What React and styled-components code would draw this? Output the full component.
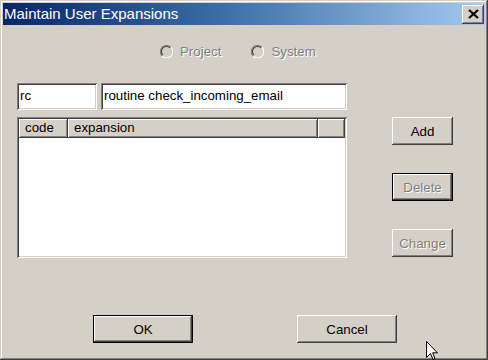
import React from "react";
import styled, { createGlobalStyle, css } from "styled-components";

const Global = createGlobalStyle`
  html, body { margin: 0; padding: 0; background: #d4d0c8; }
  body { font-family: "Liberation Sans", Arial, sans-serif; }
`;

const FACE = "#d4d0c8";

const raised = css`
  box-shadow: inset -1px -1px #404040, inset 1px 1px #ffffff,
    inset -2px -2px #808080, inset 2px 2px ${FACE};
`;

const sunken = css`
  box-shadow: inset 1px 1px #808080, inset -1px -1px #ffffff,
    inset 2px 2px #404040, inset -2px -2px ${FACE};
`;

const Window = styled.div`
  position: relative;
  width: 488px;
  height: 360px;
  box-sizing: border-box;
  padding: 3px;
  background: ${FACE};
  display: flex;
  flex-direction: column;
  overflow: hidden;
  box-shadow: inset -1px -1px #404040, inset 1px 1px ${FACE},
    inset -2px -2px #808080, inset 2px 2px #ffffff;
  font-family: "Liberation Sans", Arial, sans-serif;
  font-size: 13.3px;
  color: #000;
`;

const TitleBar = styled.div`
  height: 22px;
  flex: none;
  display: flex;
  align-items: center;
  justify-content: space-between;
  padding: 0 1px 0 1px;
  background: linear-gradient(to right, #0a246a 0%, #3a6ea5 45%, #a6caf0 100%);
`;

const Title = styled.span`
  color: #fff;
  font-size: 15px;
  line-height: 22px;
  white-space: nowrap;
`;

const CloseButton = styled.div`
  width: 22px;
  height: 19px;
  background: ${FACE};
  ${raised};
  display: flex;
  align-items: center;
  justify-content: center;
`;

const Body = styled.div`
  display: flex;
  flex-direction: column;
`;

const RadioRow = styled.div`
  margin-top: 18px;
  height: 17px;
  padding-left: 157px;
  display: flex;
  align-items: center;
  gap: 30px;
`;

const RadioItem = styled.label`
  display: flex;
  align-items: center;
  gap: 7px;
`;

const DisabledText = styled.span`
  color: #808080;
  text-shadow: 1px 1px 0 #ffffff;
  white-space: nowrap;
`;

const MainRow = styled.div`
  margin-top: 23px;
  padding-left: 14px;
  display: flex;
`;

const LeftColumn = styled.div`
  width: 330px;
  display: flex;
  flex-direction: column;
`;

const FieldsRow = styled.div`
  display: flex;
  gap: 4px;
  height: 27px;
`;

const Field = styled.div`
  box-sizing: border-box;
  width: ${(p) => p.$w}px;
  height: 27px;
  background: #fff;
  ${sunken};
  padding: 0 3px;
  display: flex;
  align-items: center;
  white-space: nowrap;
  line-height: 16px;
  padding-bottom: 1px;
`;

const List = styled.div`
  margin-top: 7px;
  height: 141px;
  box-sizing: border-box;
  padding: 2px;
  background: #fff;
  ${sunken};
  display: flex;
  flex-direction: column;
`;

const HeaderRow = styled.div`
  display: flex;
  height: 19px;
  background: ${FACE};
`;

const HeaderCell = styled.div`
  box-sizing: border-box;
  width: ${(p) => (p.$w ? `${p.$w}px` : "auto")};
  flex: ${(p) => (p.$w ? "none" : "1")};
  height: 19px;
  padding-left: 6px;
  line-height: 18px;
  background: ${FACE};
  box-shadow: inset -1px -1px #404040, inset 1px 1px #ffffff,
    inset -2px -2px #808080;
  white-space: nowrap;
`;

const RightColumn = styled.div`
  margin-left: 45px;
  width: 61px;
  padding-top: 34px;
  display: flex;
  flex-direction: column;
  gap: 28px;
`;

const Button = styled.div`
  box-sizing: border-box;
  width: ${(p) => p.$w}px;
  height: 28px;
  display: flex;
  align-items: center;
  justify-content: center;
  background: ${FACE};
  ${raised};
  ${(p) =>
    p.$default &&
    css`
      border: 1px solid #000;
    `}
  color: ${(p) => (p.$disabled ? "#808080" : "#000")};
  text-shadow: ${(p) => (p.$disabled ? "1px 1px 0 #ffffff" : "none")};
  white-space: nowrap;
`;

const Footer = styled.div`
  margin-top: 57px;
  padding-left: 90px;
  display: flex;
  gap: 104px;
`;

const Cursor = styled.svg`
  position: absolute;
  left: 426px;
  top: 341px;
`;

const Radio = () => (
  <svg width="13" height="13" viewBox="0 0 12 12">
    <circle cx="6" cy="6" r="5" fill={FACE} />
    <path d="M10.2 2.1 A5.5 5.5 0 0 0 1.9 10.2" stroke="#808080" strokeWidth="1" fill="none" />
    <path d="M9.3 2.7 A4.5 4.5 0 0 0 2.7 9.3" stroke="#404040" strokeWidth="1" fill="none" />
    <path d="M1.9 10.2 A5.5 5.5 0 0 0 10.2 2.1" stroke="#ffffff" strokeWidth="1" fill="none" />
    <path d="M2.7 9.3 A4.5 4.5 0 0 0 9.3 2.7" stroke={FACE} strokeWidth="1" fill="none" />
  </svg>
);

export default function App() {
  return (
    <>
      <Global />
      <Window>
        <TitleBar>
          <Title>Maintain User Expansions</Title>
          <CloseButton>
            <svg width="11" height="10" viewBox="0 0 11 10">
              <path d="M1 1 L10 9 M10 1 L1 9" stroke="#000" strokeWidth="2.2" />
            </svg>
          </CloseButton>
        </TitleBar>
        <Body>
          <RadioRow>
            <RadioItem>
              <Radio />
              <DisabledText>Project</DisabledText>
            </RadioItem>
            <RadioItem>
              <Radio />
              <DisabledText>System</DisabledText>
            </RadioItem>
          </RadioRow>
          <MainRow>
            <LeftColumn>
              <FieldsRow>
                <Field $w={80}>rc</Field>
                <Field $w={246}>routine check_incoming_email</Field>
              </FieldsRow>
              <List>
                <HeaderRow>
                  <HeaderCell $w={49}>code</HeaderCell>
                  <HeaderCell $w={250}>expansion</HeaderCell>
                  <HeaderCell />
                </HeaderRow>
              </List>
            </LeftColumn>
            <RightColumn>
              <Button $w={61}>Add</Button>
              <Button $w={61} $default $disabled>
                Delete
              </Button>
              <Button $w={61} $disabled>
                Change
              </Button>
            </RightColumn>
          </MainRow>
          <Footer>
            <Button $w={100} $default>
              OK
            </Button>
            <Button $w={100}>Cancel</Button>
          </Footer>
        </Body>
        <Cursor width="12" height="20" viewBox="0 0 12 20">
          <path
            d="M0.5 0.5 L0.5 16.5 L4.5 12.5 L7 18.5 L9 17.6 L6.6 11.8 L11.5 11.8 Z"
            fill="#fff"
            stroke="#000"
            strokeWidth="1"
            strokeLinejoin="miter"
          />
        </Cursor>
      </Window>
    </>
  );
}
